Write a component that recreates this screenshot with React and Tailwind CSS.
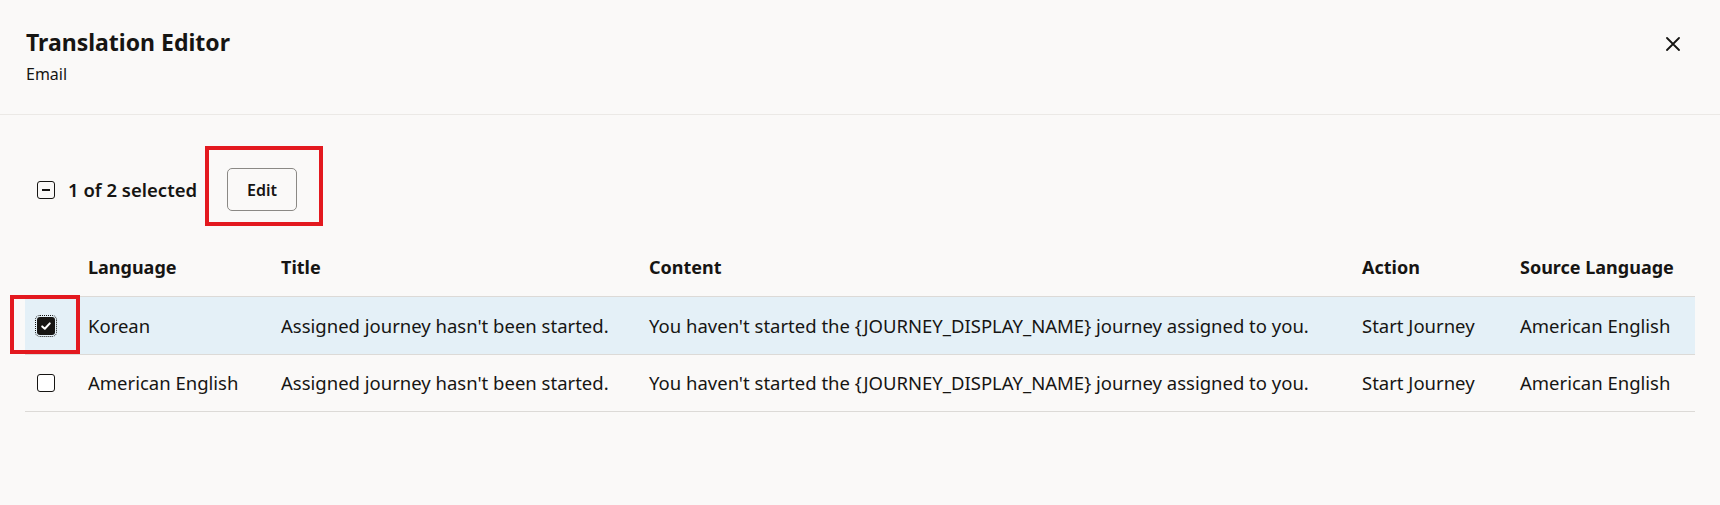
import { useState } from 'react'

const ROWS = [
  { id: 'ko', language: 'Korean', title: "Assigned journey hasn't been started.", content: "You haven't started the {JOURNEY_DISPLAY_NAME} journey assigned to you.", action: 'Start Journey', source: 'American English' },
  { id: 'en', language: 'American English', title: "Assigned journey hasn't been started.", content: "You haven't started the {JOURNEY_DISPLAY_NAME} journey assigned to you.", action: 'Start Journey', source: 'American English' },
]

const COLS = 'grid grid-cols-[56px_193px_368px_713px_158px_1fr]'

function Checkbox({ checked, focused }) {
  if (checked) {
    return (
      <span className={`flex h-[18px] w-[18px] items-center justify-center rounded-[3px] bg-[#161513] ${focused ? 'outline-1 outline-dotted outline-offset-[1px] outline-[#161513]' : ''}`}>
        <svg width="12" height="12" viewBox="0 0 12 12" fill="none">
          <path d="M2.2 6.4 4.8 8.8 9.8 3.4" stroke="#fff" strokeWidth="2" strokeLinecap="round" strokeLinejoin="round" />
        </svg>
      </span>
    )
  }
  return <span className="block h-[18px] w-[18px] rounded-[3px] border-[1.5px] border-[#161513] bg-white" />
}

export default function App() {
  const [selected] = useState(['ko'])

  return (
    <div className="min-h-screen bg-[#faf9f8] text-[#161513] font-['Noto_Sans',sans-serif]">
      {/* Header */}
      <div className="flex items-start justify-between border-b border-[#ebe9e6] pl-[26px] pr-[40px] pt-[27px] pb-[30px]">
        <div>
          <h1 className="text-[23px] leading-[30px] font-bold">Translation Editor</h1>
          <p className="mt-[7px] text-[16px] leading-[20px]">Email</p>
        </div>
        <button className="mt-[10px]">
          <svg width="14" height="14" viewBox="0 0 14 14" fill="none">
            <path d="M1 1 13 13M13 1 1 13" stroke="#161513" strokeWidth="1.8" strokeLinecap="round" />
          </svg>
        </button>
      </div>

      <div className="px-[25px] pt-[53px]">
        {/* Toolbar */}
        <div className="flex h-[43px] items-center pl-[12px]">
          <span className="flex h-[18px] w-[18px] items-center justify-center rounded-[3px] border-[1.5px] border-[#161513]">
            <span className="block h-[2px] w-[8px] bg-[#161513]" />
          </span>
          <span className="ml-[13px] text-[18.5px] font-semibold">1 of 2 selected</span>
          <div className="relative ml-[30px]">
            <button className="h-[43px] w-[70px] rounded-[5px] border border-[#8b8985] bg-[#faf9f8] text-[16px] font-semibold">
              Edit
            </button>
            <div className="pointer-events-none absolute left-[-22px] top-[-22px] h-[80px] w-[118px] border-4 border-[#e3191f]" />
          </div>
        </div>

        {/* Table */}
        <div className="mt-[27px] text-[18.5px]">
          <div className={`${COLS} h-[58px] items-center text-[18px] font-bold`}>
            <div />
            <div className="pl-[7px]">Language</div>
            <div className="pl-[7px]">Title</div>
            <div className="pl-[7px]">Content</div>
            <div className="pl-[7px]">Action</div>
            <div className="pl-[7px]">Source Language</div>
          </div>
          {ROWS.map((row, i) => {
            const isSel = selected.includes(row.id)
            return (
              <div
                key={row.id}
                className={`${COLS} h-[58px] items-center border-t border-[#dcdad7] ${i === ROWS.length - 1 ? 'border-b' : ''} ${isSel ? 'bg-[#e4f0f7]' : ''}`}
              >
                <div className="relative pl-[12px]">
                  <Checkbox checked={isSel} focused={isSel} />
                  {isSel && (
                    <div className="pointer-events-none absolute left-[-15px] top-[-22px] h-[59px] w-[70px] border-4 border-[#e3191f]" />
                  )}
                </div>
                <div className="pl-[7px] whitespace-nowrap">{row.language}</div>
                <div className="pl-[7px] whitespace-nowrap">{row.title}</div>
                <div className="pl-[7px] whitespace-nowrap">{row.content}</div>
                <div className="pl-[7px] whitespace-nowrap">{row.action}</div>
                <div className="pl-[7px] whitespace-nowrap">{row.source}</div>
              </div>
            )
          })}
        </div>
      </div>
    </div>
  )
}
